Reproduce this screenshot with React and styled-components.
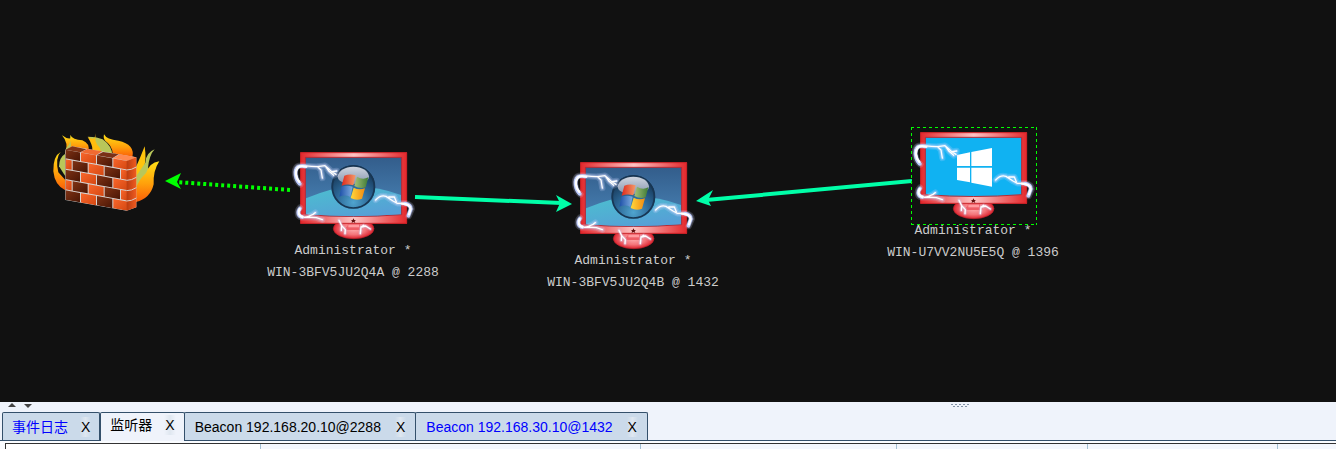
import React from "react";
import styled, { createGlobalStyle } from "styled-components";

const Global = createGlobalStyle`
  *{box-sizing:border-box}
  body{margin:0;background:#eff3fb;font-family:"Liberation Sans","Noto Sans CJK SC",sans-serif;font-size:14px}
`;
const Shell = styled.div`
  display:flex;flex-direction:column;height:100vh;
`;
const Graph = styled.main`
  position:relative;flex:1;min-height:0;background:#111;overflow:hidden;
`;
const Edges = styled.svg`
  position:absolute;inset:0;width:100%;height:100%;
`;
const Wall = styled.svg`
  position:absolute;left:40px;top:125px;width:130px;height:95px;
`;
const Node = styled.figure`
  position:absolute;left:${p => p.$x}px;top:${p => p.$y}px;width:136px;margin:0;
  display:flex;flex-direction:column;align-items:center;
`;
const Screen = styled.svg`
  width:140px;height:95px;flex:none;align-self:flex-start;
`;
const Label = styled.figcaption`
  color:#ccc;font-family:"Liberation Mono",monospace;font-size:13px;line-height:22px;
  text-align:center;white-space:pre;
`;
const Selection = styled.div`
  position:absolute;left:6px;top:2px;width:126px;height:98px;
`;
const SelectionOutline = styled.svg`
  display:block;width:100%;height:100%;
`;
const Splitter = styled.div`
  flex:none;height:10px;background:#eff3fb;display:flex;align-items:flex-start;
`;
const Collapse = styled.svg`
  width:32px;height:8px;flex:none;
`;
const Grip = styled.svg`
  width:24px;height:8px;margin-left:auto;margin-right:27%;
`;
const Tabs = styled.nav`
  flex:none;display:flex;height:29px;padding-left:2px;border-bottom:1px solid #34506b;
`;
const Tab = styled.div`
  display:flex;align-items:center;height:${p => (p.$active ? 29 : 28)}px;
  padding:0 ${p => (p.$wide ? 9 : 8)}px ${p => (p.$active ? 4 : 0)}px ${p => (p.$wide ? 10 : 9)}px;
  gap:${p => (p.$wide ? 14 : 12)}px;
  border:1px solid #34506b;border-bottom:0;border-radius:2px 2px 0 0;
  margin-right:${p => (p.$joined ? -1 : 0)}px;
  background:${p => (p.$active ? "#eff3fb" : "#cbdaea")};
`;
const TabName = styled.button`
  border:0;padding:0;background:none;font:inherit;line-height:20px;white-space:nowrap;
  color:${p => (p.$unread ? "#0000ff" : "#000")};
`;
const Close = styled.button`
  border:0;padding:0 1px;font:inherit;line-height:20px;color:#000;
  background:linear-gradient(90deg,transparent,#dfe7f0,transparent);
`;
const Pane = styled.section`
  flex:none;height:8px;padding:2px 0 0 5px;background:#fafcff;overflow:hidden;
`;
const Table = styled.table`
  width:100%;height:20px;table-layout:fixed;border-collapse:separate;border-spacing:0;
  border-top:1px solid #333;border-left:1px solid #333;background:#f4f7fd;
`;
const Head = styled.th`
  padding:0;width:${p => p.$w};border-right:1px solid #a3bfd3;
  background:${p => (p.$first ? "#fff" : "#f4f7fd")};
  &:last-child{border-right:0}
`;

function Bolts() {
  const d = [
    "M46 118C30 104 24 76 37 64C48 57 65 66 98 65L120 62Q131 70 140 80L155 78M98 65L108 75L112 99M122 64L132 79L146 91M140 80L153 88",
    "M45 188C34 201 38 215 50 217L66 216L84 208L91 203M66 216L94 218L112 224",
    "M272 165Q286 149 303 154L324 168L337 175L362 175Q379 179 380 192L371 213M311 156L328 156L334 170",
    "M162 226L170 242L169 256M170 242L181 254L180 266M226 266L228 246L242 243L256 252M228 247L236 241",
  ];
  return (
    <g fill="none" strokeLinecap="round" strokeLinejoin="round">
      {d.map((x, i) => <path key={i} d={x} stroke="#cdd8ff" strokeOpacity=".22" strokeWidth={i === 3 ? 12 : 19} />)}
      {d.map((x, i) => <path key={i} d={x} stroke="#cfd6ff" strokeOpacity=".4" strokeWidth={i === 3 ? 7 : 11} />)}
      {d.map((x, i) => <path key={i} d={x} stroke="#fff" strokeWidth="4" />)}
      <path d="M44 116C31 102 27 77 38 67Q45 61 61 64M45 191C36 203 41 214 52 216M360 176Q377 179 377 192L370 212" stroke="#bccbff" strokeWidth="11" />
      <path d="M43 111C31 98 29 78 39 67Q46 61 64 65M44 192C37 203 42 213 53 216M350 176Q376 177 377 192L372 208" stroke="#fff" strokeWidth="7" />
    </g>
  );
}

function Monitor({ id, modern }) {
  const u = n => `${id}-${n}`;
  const r = n => `url(#${id}-${n})`;
  return (
    <Screen viewBox="0 0 420 285" role="img" aria-label="host">
      <defs>
        <linearGradient id={u("frame")}>
          <stop offset="0" stopColor="#e4282c" /><stop offset=".5" stopColor="#ffc4c4" /><stop offset="1" stopColor="#e4282c" />
        </linearGradient>
        <linearGradient id={u("sky")} x2="0" y2="1">
          <stop offset="0" stopColor="#335d8b" /><stop offset="1" stopColor="#4a86b9" />
        </linearGradient>
        <linearGradient id={u("hill")} x2=".6" y2="1">
          <stop offset="0" stopColor="#4bc0cf" /><stop offset="1" stopColor="#56a0d6" />
        </linearGradient>
        <radialGradient id={u("foot")}>
          <stop offset="0" stopColor="#ffb0b0" /><stop offset=".6" stopColor="#f4747a" /><stop offset="1" stopColor="#dc2530" />
        </radialGradient>
        <radialGradient id={u("orb")} cy=".85" r=".8">
          <stop offset="0" stopColor="#4fa4cf" /><stop offset=".5" stopColor="#2b6594" /><stop offset="1" stopColor="#15324f" />
        </radialGradient>
        <linearGradient id={u("gloss")} x2="0" y2="1">
          <stop offset="0" stopColor="#cfd5df" /><stop offset="1" stopColor="#8796af" />
        </linearGradient>
        <linearGradient id={u("red")}><stop offset="0" stopColor="#e02a1c" /><stop offset="1" stopColor="#f39b6a" /></linearGradient>
        <linearGradient id={u("green")}><stop offset="0" stopColor="#a4c178" /><stop offset="1" stopColor="#3d7a35" /></linearGradient>
        <linearGradient id={u("blue")}><stop offset="0" stopColor="#1c4fa8" /><stop offset="1" stopColor="#7faee0" /></linearGradient>
        <linearGradient id={u("gold")}><stop offset="0" stopColor="#ffd83c" /><stop offset="1" stopColor="#f08a12" /></linearGradient>
      </defs>
      <ellipse cx="206" cy="251" rx="61" ry="30" fill={r("foot")} stroke="#b9202a" strokeWidth="2" />
      <path d="M188 234H225V243L232 249V255H181V249L188 243Z" fill="#ef5d66" />
      <path d="M190 239H222V247H190Z" fill="#ff9ba0" />
      <path d="M46 22H366V236H46Z" fill={r("frame")} />
      <path d="M47 23H365V235H47Z" fill="none" stroke="#c92026" strokeWidth="3" />
      <path d="M61 37H350V209Q206 220 61 209Z" fill={modern ? "#10b2f2" : r("sky")} stroke="#b72a35" strokeWidth="3" />
      {!modern && <path d="M63 160Q140 126 205 125Q282 124 348 150V208Q206 219 63 208Z" fill={r("hill")} />}
      {modern ? (
        <path d="M156 90L195 82V123H156ZM199 81L261 69V123H199ZM156 128H195V172L156 165ZM199 128H261V185L199 173Z" fill="#fff" />
      ) : (
        <g>
          <circle cx="205" cy="126" r="66" fill={r("orb")} />
          <circle cx="205" cy="126" r="63" fill="none" stroke="#183653" strokeWidth="5" />
          <path d="M158 94Q164 67 205 65Q247 67 252 94Q252 116 205 117Q158 116 158 94Z" fill={r("gloss")} />
          <path d="M178 92Q195 85 212 91L205 121Q187 116 170 122Z" fill={r("red")} />
          <path d="M216 95Q233 106 250 97L242 127Q224 132 208 123Z" fill={r("green")} />
          <path d="M169 125Q187 119 203 125L196 156Q181 148 163 155Z" fill={r("blue")} />
          <path d="M206 128Q222 137 240 130L231 161Q214 168 197 159Z" fill={r("gold")} />
        </g>
      )}
      <path d="M205 220L208 225L213 226L209 229L211 234L205 231L200 234L201 229L198 226L203 225Z" fill="#611" />
      <Bolts />
    </Screen>
  );
}

function Firewall() {
  const rows = [0, 1, 2, 3, 4];
  return (
    <Wall viewBox="0 0 390 285" role="img" aria-label="firewall">
      <defs>
        <linearGradient id="flame" x2="0" y2="1"><stop offset="0" stopColor="#ffdf16" /><stop offset=".55" stopColor="#ffa00b" /><stop offset="1" stopColor="#fa5c08" /></linearGradient>
        <linearGradient id="light" x2="1" y2="1"><stop offset="0" stopColor="#f9662b" /><stop offset="1" stopColor="#d44812" /></linearGradient>
        <linearGradient id="dark" x2="1" y2="1"><stop offset="0" stopColor="#803315" /><stop offset="1" stopColor="#4a1605" /></linearGradient>
        <linearGradient id="side"><stop offset="0" stopColor="#b93c10" /><stop offset="1" stopColor="#f05b20" /></linearGradient>
        <clipPath id="front"><path d="M76 74L261 108V257L76 225Z" /></clipPath>
      </defs>
      <path d="M75 87Q88 55 66 31Q80 42 91 40V30Q98 45 127 46Q151 56 145 79Z" fill="url(#flame)" />
      <path d="M92 29Q96 52 78 70L76 86Q99 74 91 47ZM143 35Q174 36 188 43Q216 63 217 91L169 76Q176 57 143 35Z" fill="#b9c75a" />
      <path d="M168 25Q162 45 172 60Q187 73 178 83L157 74Q159 62 143 36Q158 44 163 40Z" fill="#ffbd0d" />
      <path d="M192 28Q200 44 235 47Q286 58 277 97L218 85Q216 61 196 48Q189 40 192 28Z" fill="url(#flame)" />
      <path d="M62 81Q45 98 55 142L76 165V196Q44 181 40 139Q39 93 62 81Z" fill="url(#flame)" />
      <path d="M75 87Q58 97 57 124L76 154Z" fill="#b9c75a" />
      <path d="M314 64Q302 95 288 126V202Q328 177 312 125Q320 105 314 64Z" fill="#ffc40c" />
      <path d="M344 73Q318 83 316 113L289 153V205Q329 182 324 128Q328 90 344 73Z" fill="#b9c75a" />
      <path d="M358 109Q327 114 318 144Q296 165 288 189V231Q331 221 341 178Q339 137 358 109Z" fill="url(#flame)" />
      <path d="M76 74L97 64L289 97V247L260 257L76 225Z" fill="#d8d4d2" />
      <path d="M76 74L97 64L139 73L121 82Z" fill="#803315" />
      <path d="M122 82L142 72L187 79L168 91Z" fill="#f06a31" />
      <path d="M170 91L189 81L236 88L218 99Z" fill="#7a3017" />
      <path d="M219 99L239 88L289 97L262 108Z" fill="#ff8951" />
      <g clipPath="url(#front)">
        {rows.map(i => {
          const edges = i % 2 ? [76, 98, 146, 194, 243, 264] : [76, 123, 171, 220, 264];
          return edges.slice(0, -1).map((x, j) => {
            const x2 = edges[j + 1] - 3;
            const y = 72 + i * 31 + (x - 76) * .18;
            const rise = (x2 - x) * .18;
            const isDark = i % 2 ? j % 2 === 1 : j % 2 === 0;
            return <path key={`${i}-${j}`} d={`M${x} ${y}L${x2} ${y + rise}V${y + 28 + rise}L${x} ${y + 28}Z`} fill={isDark ? "url(#dark)" : "url(#light)"} />;
          });
        })}
      </g>
      <path d="M260 108L289 97V247L260 257Z" fill="url(#side)" />
      {[1, 2, 3, 4].map(i => <path key={i} d={`M260 ${104 + i * 31}Q275 ${104 + i * 31} 289 ${95 + i * 31}`} fill="none" stroke="#d8d0cc" strokeWidth="3" />)}
    </Wall>
  );
}

const hosts = [
  { id: "a", x: 285, y: 145, name: "WIN-3BFV5JU2Q4A @ 2288" },
  { id: "b", x: 565, y: 155, name: "WIN-3BFV5JU2Q4B @ 1432" },
  { id: "c", x: 905, y: 125, name: "WIN-U7VV2NU5E5Q @ 1396", modern: true },
];
const tabs = [
  { name: "事件日志", unread: true },
  { name: "监听器", active: true, joined: true },
  { name: "Beacon 192.168.20.10@2288", joined: true, wide: true },
  { name: "Beacon 192.168.30.10@1432", unread: true, wide: true },
];
const columns = ["255px", "380px", "256px", "191px", "190px", "auto"];

export default function App() {
  return (
    <Shell>
      <Global />
      <Graph>
        <Edges aria-hidden="true">
          <path d="M290 190L176 182" stroke="#0f0" strokeWidth="4" strokeDasharray="3 3" />
          <path d="M165 181L181 173L177 182L181 189Z" fill="#0f0" />
          <g stroke="#00ffa8" strokeWidth="4"><path d="M415 197L562 203" /><path d="M912 181L706 200" /></g>
          <path d="M572 204L556 212L560 203L556 195ZM696 201L713 190L708 200L711 206Z" fill="#00ffa8" />
        </Edges>
        <Firewall />
        {hosts.map(h => (
          <Node key={h.id} $x={h.x} $y={h.y}>
            <Monitor id={h.id} modern={h.modern} />
            {h.modern && (
              <Selection>
                <SelectionOutline><path d="M0 .5H126M.5 0V98M0 97.5H126M125.5 0V98" stroke="#0f0" strokeDasharray="3 3" /></SelectionOutline>
              </Selection>
            )}
            <Label>{"Administrator *\n" + h.name}</Label>
          </Node>
        ))}
      </Graph>
      <Splitter>
        <Collapse aria-hidden="true"><path d="M8 5L12 1L16 5ZM24 2H32L28 6Z" fill="#444" /></Collapse>
        <Grip aria-hidden="true">
          {[0, 4, 8, 12, 16].map(x => <path key={x} d={`M${x} 2h2v1h-2z`} fill="#8292a6" />)}
          {[2, 6, 10, 14].map(x => <path key={x} d={`M${x} 4h2v1h-2z`} fill="#8292a6" />)}
        </Grip>
      </Splitter>
      <Tabs>
        {tabs.map(t => (
          <Tab key={t.name} $active={t.active} $joined={t.joined} $wide={t.wide}>
            <TabName $unread={t.unread}>{t.name}</TabName>
            <Close>X</Close>
          </Tab>
        ))}
      </Tabs>
      <Pane>
        <Table>
          <thead><tr>{columns.map((w, i) => <Head key={i} $w={w} $first={i === 0} />)}</tr></thead>
        </Table>
      </Pane>
    </Shell>
  );
}
